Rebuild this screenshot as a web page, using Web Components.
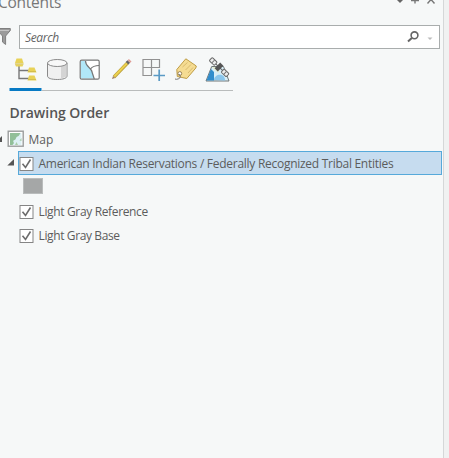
<!DOCTYPE html>
<html lang="en"><head><meta charset="utf-8"><title>Contents</title>
<style>html,body{margin:0;height:100%;overflow:hidden;background:#f0f1f1}body{font-family:"Open Sans","Noto Sans",sans-serif;color:#5c5c5c}</style></head>
<body>
<contents-pane>
  <pane-header>Contents</pane-header>
  <search-row>Search</search-row>
  <tool-tabs></tool-tabs>
  <section-title>Drawing Order</section-title>
  <map-node>Map</map-node>
  <layer-row selected style="--ls:-.275px">American Indian Reservations / Federally Recognized Tribal Entities</layer-row>
  <layer-symbol></layer-symbol>
  <layer-row style="--ls:-.35px">Light Gray Reference</layer-row>
  <layer-row style="--ls:-.38px">Light Gray Base</layer-row>
</contents-pane>
<script>
function define(name, markup) {
  const t = document.createElement('template');
  t.innerHTML = markup;
  customElements.define(name, class extends HTMLElement {
    constructor() {
      super();
      this.attachShadow({mode: 'open'}).appendChild(t.content.cloneNode(true));
    }
  });
}
define('contents-pane', `<style>
:host{display:flex;flex-direction:column;box-sizing:border-box;width:444px;height:458px;background:#f6f8f8;border-right:1px solid #d5d7d8;overflow:hidden}
</style><slot></slot>`);

define('pane-header', `<style>
:host{display:flex;justify-content:space-between;height:25px;flex:none;color:#777}
span{font-size:15.5px;line-height:22px;margin:-9px 0 0 -2px;letter-spacing:-.25px;white-space:nowrap}
svg{display:block;width:48px;height:8px}
</style><span><slot></slot></span>
<svg viewBox="0 0 48 8"><path d="M2 0h6L5 3z" fill="#666"/><path d="M16 .5h8M20 0v3.500M32.500 3.500l3.500-4 3.500 4" fill="none" stroke="#777" stroke-width="1.4"/></svg>`);

define('search-row', `<style>
:host{display:flex;height:24px;flex:none}
.filter{width:19px;height:24px}
.box{display:flex;align-items:center;box-sizing:border-box;width:421px;height:24px;border:1px solid #a9adad;background:#fff;padding-left:5px}
span{flex:1;font-size:12px;font-style:italic;color:#666;letter-spacing:-.35px;line-height:20px;padding-top:2px}
.find{width:36px;height:22px}
</style>
<svg class="filter" viewBox="0 0 19 24"><path d="M-2 3.500h12.300v2L5.600 11v8.500L2.500 17v-6l-4.500-5z" fill="#9b9b9b" stroke="#808080"/><path d="M0 5.500h9" stroke="#c5c5c5"/></svg>
<div class="box"><span><slot></slot></span>
<svg class="find" viewBox="0 0 36 22"><circle cx="11.500" cy="9.300" r="3.400" fill="none" stroke="#666" stroke-width="1.600"/><path d="M8.800 12L5 15.600" stroke="#666" stroke-width="2"/><path d="M24.500 11.500h5l-2.500 2.500z" fill="#bbb"/></svg></div>`);

define('tool-tabs', `<style>
:host{display:block;width:233px;height:43px;flex:none}
svg{display:block}
</style>
<svg width="233" height="43" viewBox="0 49 233 43" fill="none">
<path d="M42 90.500h191" stroke="#b9bcbc"/><path d="M9.500 89.500h32" stroke="#077ac4" stroke-width="3"/>
<path d="M19 66v12.500h10M19 70.500h10" stroke="#777" stroke-width="1.400"/>
<g fill="#e8d257"><path d="M16.500 58.500h5.500l1.700 5H14.800z"/><path d="M15 64.300h8.500l-1 2.200H16z"/><path d="M29 67.500h5.500l2 5h-9z"/><path d="M29 75.500h5.500l2 5h-9z"/></g><path d="M15 64h8.500M28 71.500h8M28 79.500h8" stroke="#bca846" stroke-width=".5"/>
<path d="M47.500 63v13c0 2.200 4 3.500 9.800 3.500S67 78.200 67 76V63" fill="#f0f0f0" stroke="#8a8a8a"/><path d="M61 66.500l5.500-2v12l-5.500 2z" fill="#d4d4d4"/><ellipse cx="57.250" cy="63" rx="9.750" ry="3.500" fill="#f8f8f8" stroke="#8a8a8a"/>
<rect x="80.500" y="60.500" width="18.500" height="18.500" rx="1" fill="#fff"/><path d="M81 61h4.500c0 6 6 6.500 6.500 11l2 6.500H81z" fill="#b1e7f8"/><path d="M85.500 61c0 6 6 6.500 6.500 11l2.300 7M90.500 69c2-2.500 5-3.500 8.500-3.500" stroke="#777" stroke-width="1.200"/><rect x="80.200" y="60.200" width="19" height="19" rx="1.500" stroke="#777" stroke-width="1.200"/>
<path d="M114 77L127.500 63" stroke="#b69b37" stroke-width="3.300"/><path d="M114.300 76.500L127.500 62.800" stroke="#ecd14f" stroke-width="2"/><path d="M112 79l1-3 2.200 2z" fill="#a18164"/><path d="M127 63.300l1.800-1.800" stroke="#666" stroke-width="3.700"/><path d="M129 61.500l1.200-1.200" stroke="#df9c94" stroke-width="3.700"/>
<path d="M143 59.500h16.500v8.500M143 59v16.500h9M143 67.500h16.500M151.500 59v16" stroke="#919191" stroke-width="1.200"/><path d="M153.500 75.500H165M159.200 69.500v11.500" stroke="#5a9ac5" stroke-width="1.700"/>
<path d="M185.800 58.800L196.300 66l-.5 2-9 10.500-9.500-2-.5-7z" fill="#f5dc92" stroke="#bf9d46"/><path d="M182.500 67l5-4.500M185.500 70l5.500-5.500M188 73l5-5.500" stroke="#d9bb70"/><circle cx="179.800" cy="73.500" r="1.900" fill="#fff" stroke="#977f50"/><path d="M179 74l1.500 2.500c0 2-4 3.500-5.500 2.500" stroke="#777"/>
<path d="M211.700 66.500h11.800L229 81h-23z" fill="#d8eef7" stroke="#707777"/><path d="M211 69l3 3v8.500h-7.500z" fill="#318dcc"/><path d="M214 80c0-6 11-8 11 .5z" fill="#8ac6ec"/><path d="M212 67h5l2.500 6-3.500-2z" fill="#e5edcf"/>
<g transform="translate(219 67) rotate(44)"><path d="M-11 0h22" stroke="#666"/><rect x="-11.500" y="-2.200" width="7" height="4.400" rx="1" fill="#eee" stroke="#666"/><rect x="5" y="-2.200" width="7" height="4.400" rx="1" fill="#eee" stroke="#666"/><path d="M-8 -2v4M8.500-2v4" stroke="#777"/><rect x="-2.200" y="-4" width="4.400" height="8" fill="#555"/></g>
</svg>`);

define('section-title', `<style>
:host{display:block;height:38px;flex:none;box-sizing:border-box;padding:10px 0 0 9.500px;font-size:14px;font-weight:600;line-height:22px;letter-spacing:-.02px;color:#555}
</style><slot></slot>`);

define('map-node', `<style>
:host{display:flex;height:21px;flex:none;font-size:12px;line-height:20px}
svg{display:block;width:28.500px;height:21px}
</style><svg viewBox="0 130 28.500 21"><path d="M2 136v6h-6z" fill="#555"/><rect x="8.200" y="131.200" width="15" height="15" fill="#fff" stroke="#999c9c" stroke-width="1.400"/><path d="M10 133h11.500v12H10z" fill="#ddf0f4"/><path d="M10 133h10.500c-1.500 2-1 3-3 3.500-2 .5-1 3-3 3.500s-1 2-.5 3l-1.500 2H10z" fill="#91bf98"/><path d="M21.500 138v3l-2-.5zM15 145l1.500-3 1.500 3z" fill="#a9cda9"/></svg><slot></slot>`);

define('layer-row', `<style>
:host{display:flex;height:24px;flex:none}
.caret{width:18px;height:24px}
.caret path{display:none}
:host([selected]) .caret path{display:block}
.body{display:flex;box-sizing:border-box;width:424px;height:24px;border:1px solid transparent}
:host([selected]) .body{background:#c6dcef;border-color:#56a9da;padding-top:1px}
.check{width:19.500px;height:22px;flex:none}
span{font-size:12px;line-height:22px;letter-spacing:var(--ls);white-space:nowrap}
</style><svg class="caret" viewBox="0 0 18 24"><path d="M14 8v6.500H7.300z" fill="#555"/></svg>
<div class="body"><svg class="check" viewBox="0 0 19.500 22"><rect x="1" y="4.500" width="13" height="13" fill="#fff" stroke="#858585"/><path d="M3.500 10.800l3 3.700 5-8" fill="none" stroke="#6b6b6b" stroke-width="1.600"/></svg><span><slot></slot></span></div>`);

define('layer-symbol', `<style>
:host{display:block;height:25px;flex:none;box-sizing:border-box;padding:3px 0 0 23px}
div{box-sizing:border-box;width:20px;height:16px;background:#a5a7a7;border:1px solid #b9bcbc}
</style><div></div>`);
</script>
</body></html>
